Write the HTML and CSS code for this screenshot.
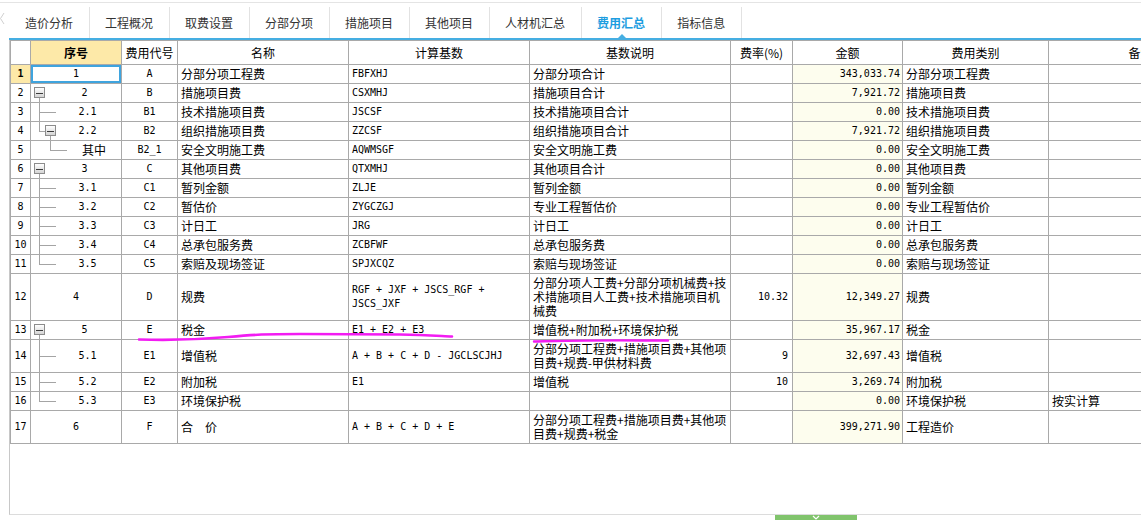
FILE: index.html
```html
<!DOCTYPE html>
<html lang="zh-CN">
<head>
    <meta charset="UTF-8">
    <title>费用汇总</title>
    <link rel="stylesheet" href="styles.css">
</head>
<body>
    <div class="tabbar">
        <span class="nav-prev">
            <svg width="10" height="31" viewBox="0 0 10 31"><polyline points="4,6 0.5,11.5 4,17" fill="none" stroke="#cfcfcf" stroke-width="1"/></svg>
        </span>
        <div class="tabs">
            <span class="tab">造价分析</span>
            <span class="tab">工程概况</span>
            <span class="tab">取费设置</span>
            <span class="tab">分部分项</span>
            <span class="tab">措施项目</span>
            <span class="tab">其他项目</span>
            <span class="tab">人材机汇总</span>
            <span class="tab active">费用汇总</span>
            <span class="tab">指标信息</span>
        </div>
    </div>

    <div class="grid">
        <table class="sheet">
            <colgroup>
                <col style="width:20px">
                <col style="width:91px">
                <col style="width:56px">
                <col style="width:171px">
                <col style="width:181px">
                <col style="width:201px">
                <col style="width:62px">
                <col style="width:110px">
                <col style="width:146px">
                <col style="width:184px">
            </colgroup>
            <thead>
                <tr>
                    <th></th>
                    <th class="hl">序号</th>
                    <th>费用代号</th>
                    <th>名称</th>
                    <th>计算基数</th>
                    <th>基数说明</th>
                    <th>费率(%)</th>
                    <th>金额</th>
                    <th>费用类别</th>
                    <th>备注</th>
                </tr>
            </thead>
            <tbody>
                <tr>
                    <td class="rn cur">1</td>
                    <td class="seq l0 picked">1</td>
                    <td class="code">A</td>
                    <td>分部分项工程费</td>
                    <td class="base">FBFXHJ</td>
                    <td>分部分项合计</td>
                    <td class="rate"></td>
                    <td class="amt">343,033.74</td>
                    <td>分部分项工程费</td>
                    <td></td>
                </tr>
                <tr>
                    <td class="rn">2</td>
                    <td class="seq l0e">2</td>
                    <td class="code">B</td>
                    <td>措施项目费</td>
                    <td class="base">CSXMHJ</td>
                    <td>措施项目合计</td>
                    <td class="rate"></td>
                    <td class="amt">7,921.72</td>
                    <td>措施项目费</td>
                    <td></td>
                </tr>
                <tr>
                    <td class="rn">3</td>
                    <td class="seq l1">2.1</td>
                    <td class="code">B1</td>
                    <td>技术措施项目费</td>
                    <td class="base">JSCSF</td>
                    <td>技术措施项目合计</td>
                    <td class="rate"></td>
                    <td class="amt">0.00</td>
                    <td>技术措施项目费</td>
                    <td></td>
                </tr>
                <tr>
                    <td class="rn">4</td>
                    <td class="seq l1e">2.2</td>
                    <td class="code">B2</td>
                    <td>组织措施项目费</td>
                    <td class="base">ZZCSF</td>
                    <td>组织措施项目合计</td>
                    <td class="rate"></td>
                    <td class="amt">7,921.72</td>
                    <td>组织措施项目费</td>
                    <td></td>
                </tr>
                <tr>
                    <td class="rn">5</td>
                    <td class="seq l2c zh">其中</td>
                    <td class="code">B2_1</td>
                    <td>安全文明施工费</td>
                    <td class="base">AQWMSGF</td>
                    <td>安全文明施工费</td>
                    <td class="rate"></td>
                    <td class="amt">0.00</td>
                    <td>安全文明施工费</td>
                    <td></td>
                </tr>
                <tr>
                    <td class="rn">6</td>
                    <td class="seq l0e">3</td>
                    <td class="code">C</td>
                    <td>其他项目费</td>
                    <td class="base">QTXMHJ</td>
                    <td>其他项目合计</td>
                    <td class="rate"></td>
                    <td class="amt">0.00</td>
                    <td>其他项目费</td>
                    <td></td>
                </tr>
                <tr>
                    <td class="rn">7</td>
                    <td class="seq l1">3.1</td>
                    <td class="code">C1</td>
                    <td>暂列金额</td>
                    <td class="base">ZLJE</td>
                    <td>暂列金额</td>
                    <td class="rate"></td>
                    <td class="amt">0.00</td>
                    <td>暂列金额</td>
                    <td></td>
                </tr>
                <tr>
                    <td class="rn">8</td>
                    <td class="seq l1">3.2</td>
                    <td class="code">C2</td>
                    <td>暂估价</td>
                    <td class="base">ZYGCZGJ</td>
                    <td>专业工程暂估价</td>
                    <td class="rate"></td>
                    <td class="amt">0.00</td>
                    <td>专业工程暂估价</td>
                    <td></td>
                </tr>
                <tr>
                    <td class="rn">9</td>
                    <td class="seq l1">3.3</td>
                    <td class="code">C3</td>
                    <td>计日工</td>
                    <td class="base">JRG</td>
                    <td>计日工</td>
                    <td class="rate"></td>
                    <td class="amt">0.00</td>
                    <td>计日工</td>
                    <td></td>
                </tr>
                <tr>
                    <td class="rn">10</td>
                    <td class="seq l1">3.4</td>
                    <td class="code">C4</td>
                    <td>总承包服务费</td>
                    <td class="base">ZCBFWF</td>
                    <td>总承包服务费</td>
                    <td class="rate"></td>
                    <td class="amt">0.00</td>
                    <td>总承包服务费</td>
                    <td></td>
                </tr>
                <tr>
                    <td class="rn">11</td>
                    <td class="seq l1c">3.5</td>
                    <td class="code">C5</td>
                    <td>索赔及现场签证</td>
                    <td class="base">SPJXCQZ</td>
                    <td>索赔与现场签证</td>
                    <td class="rate"></td>
                    <td class="amt">0.00</td>
                    <td>索赔与现场签证</td>
                    <td></td>
                </tr>
                <tr>
                    <td class="rn">12</td>
                    <td class="seq l0">4</td>
                    <td class="code">D</td>
                    <td>规费</td>
                    <td class="base">RGF + JXF + JSCS_RGF +<br>JSCS_JXF</td>
                    <td>分部分项人工费+分部分项机械费+技<br>术措施项目人工费+技术措施项目机<br>械费</td>
                    <td class="rate">10.32</td>
                    <td class="amt">12,349.27</td>
                    <td>规费</td>
                    <td></td>
                </tr>
                <tr>
                    <td class="rn">13</td>
                    <td class="seq l0e">5</td>
                    <td class="code">E</td>
                    <td>税金</td>
                    <td class="base">E1 + E2 + E3</td>
                    <td>增值税+附加税+环境保护税</td>
                    <td class="rate"></td>
                    <td class="amt">35,967.17</td>
                    <td>税金</td>
                    <td></td>
                </tr>
                <tr>
                    <td class="rn">14</td>
                    <td class="seq l1">5.1</td>
                    <td class="code">E1</td>
                    <td>增值税</td>
                    <td class="base">A + B + C + D - JGCLSCJHJ</td>
                    <td>分部分项工程费+措施项目费+其他项<br>目费+规费-甲供材料费</td>
                    <td class="rate">9</td>
                    <td class="amt">32,697.43</td>
                    <td>增值税</td>
                    <td></td>
                </tr>
                <tr>
                    <td class="rn">15</td>
                    <td class="seq l1">5.2</td>
                    <td class="code">E2</td>
                    <td>附加税</td>
                    <td class="base">E1</td>
                    <td>增值税</td>
                    <td class="rate">10</td>
                    <td class="amt">3,269.74</td>
                    <td>附加税</td>
                    <td></td>
                </tr>
                <tr>
                    <td class="rn">16</td>
                    <td class="seq l1c">5.3</td>
                    <td class="code">E3</td>
                    <td>环境保护税</td>
                    <td class="base"></td>
                    <td></td>
                    <td class="rate"></td>
                    <td class="amt">0.00</td>
                    <td>环境保护税</td>
                    <td>按实计算</td>
                </tr>
                <tr>
                    <td class="rn">17</td>
                    <td class="seq l0">6</td>
                    <td class="code">F</td>
                    <td>合　价</td>
                    <td class="base">A + B + C + D + E</td>
                    <td>分部分项工程费+措施项目费+其他项<br>目费+规费+税金</td>
                    <td class="rate"></td>
                    <td class="amt">399,271.90</td>
                    <td>工程造价</td>
                    <td></td>
                </tr>
            </tbody>
        </table>
    </div>

    <div class="foot">
        <span class="fold">
            <svg width="10" height="6" viewBox="0 0 10 6"><polyline points="2,1 5,4 8,1" fill="none" stroke="#ffffff" stroke-width="1.2"/></svg>
        </span>
    </div>

    <!-- hand-drawn highlight marks over row 13 -->
    <svg class="marks" width="1141" height="520" viewBox="0 0 1141 520">
        <path d="M139 339.5 C 170 340.5, 200 339.5, 228 337 S 265 334, 300 334 L 400 334.5 C 425 335, 440 336, 452 336.5" fill="none" stroke="#f21cf2" stroke-width="2.6" stroke-linecap="round"/>
        <path d="M534 341.5 C 560 341, 600 340, 640 340.5 L 668 340.5" fill="none" stroke="#f21cf2" stroke-width="2.4" stroke-linecap="round"/>
    </svg>
</body>
</html>
```

FILE: styles.css
```css
* {
    box-sizing: border-box;
}

body {
    margin: 0;
    width: 1141px;
    height: 520px;
    overflow: hidden;
    position: relative;
    background: #ffffff;
    color: #000000;
    font-family: "Noto Sans CJK SC", sans-serif;
    font-size: 12px;
}

/* top tab strip */
.tabbar {
    display: flex;
    margin-top: 2px;
    border-top: 1px solid #e4e4e4;
    padding-top: 4px;
}

.nav-prev {
    width: 9px;
    flex: none;
}

.nav-prev svg {
    display: block;
}

.tabs {
    display: flex;
    flex: 1;
    border-bottom: 2px solid #45aee2;
}

.tab {
    position: relative;
    height: 31px;
    line-height: 32px;
    padding: 0 16px 0 15px;
    border-right: 1px solid #e2e2e2;
    color: #333333;
    white-space: nowrap;
}

.tab:first-child {
    margin-left: 1px;
}

.tab.active {
    color: #1d9de0;
    font-weight: bold;
}

.tab.active::after {
    content: "";
    position: absolute;
    left: 50%;
    bottom: 0;
    margin-left: -4px;
    border-left: 4px solid transparent;
    border-right: 4px solid transparent;
    border-bottom: 4px solid #45aee2;
}

/* grid */
.grid {
    margin-left: 9px;
    height: 475px;
    border-left: 1px solid #c8c8c8;
    border-bottom: 1px solid #dcdcdc;
    overflow: hidden;
}

.sheet {
    border-collapse: collapse;
    table-layout: fixed;
    width: 1222px;
}

.sheet th,
.sheet td {
    border: 1px solid #a9a9a9;
    padding: 2px 3px;
    line-height: 14px;
    white-space: nowrap;
    overflow: hidden;
    vertical-align: middle;
    text-align: left;
}

.sheet thead tr {
    height: 24px;
}

.sheet th {
    font-weight: normal;
    text-align: center;
}

.sheet th.hl {
    background: #fde9a8;
    font-weight: bold;
}

.rn,
.seq,
.code,
.base,
.rate,
.amt {
    font-family: "DejaVu Sans Mono", monospace;
    font-size: 10px;
}

.sheet .rn {
    text-align: center;
    padding: 2px 0;
}

.sheet .rn.cur {
    background: #fde9a8;
    font-weight: bold;
}

.sheet .code {
    text-align: center;
}

.sheet .rate {
    text-align: right;
    padding-right: 4px;
}

.sheet .amt {
    text-align: right;
    padding-right: 2px;
    background: #fdfdee;
}

/* 序号 column with tree */
.sheet .seq {
    text-align: center;
    background-repeat: no-repeat;
}

.sheet .seq.zh {
    font-family: "Noto Sans CJK SC", sans-serif;
    font-size: 12px;
}

.sheet .seq.picked {
    box-shadow: inset 0 0 0 2px #3fa4de;
}

.sheet .seq.l0e {
    padding-left: 20px;
    background-image:
        linear-gradient(#3c3c3c, #3c3c3c),
        linear-gradient(#ffffff, #d4d4d4),
        linear-gradient(#8c8c8c, #8c8c8c),
        linear-gradient(#a4a4a4, #a4a4a4);
    background-position: 5px 9px, 4px 4px, 3px 3px, 8px 14px;
    background-size: 7px 1px, 9px 9px, 11px 11px, 1px 100%;
}

.sheet .seq.l1 {
    padding-left: 26px;
    background-image:
        linear-gradient(#a4a4a4, #a4a4a4),
        linear-gradient(#a4a4a4, #a4a4a4);
    background-position: 8px 0, 8px 50%;
    background-size: 1px 100%, 17px 1px;
}

.sheet .seq.l1c {
    padding-left: 26px;
    background-image:
        linear-gradient(#a4a4a4, #a4a4a4),
        linear-gradient(#a4a4a4, #a4a4a4);
    background-position: 8px 0, 8px 50%;
    background-size: 1px 50%, 17px 1px;
}

.sheet .seq.l1e {
    padding-left: 26px;
    background-image:
        linear-gradient(#3c3c3c, #3c3c3c),
        linear-gradient(#ffffff, #d4d4d4),
        linear-gradient(#8c8c8c, #8c8c8c),
        linear-gradient(#a4a4a4, #a4a4a4),
        linear-gradient(#a4a4a4, #a4a4a4),
        linear-gradient(#a4a4a4, #a4a4a4);
    background-position: 16px 9px, 15px 4px, 14px 3px, 19px 14px, 8px 0, 8px 9px;
    background-size: 7px 1px, 9px 9px, 11px 11px, 1px 100%, 1px 9px, 6px 1px;
}

.sheet .seq.l2c {
    padding-left: 39px;
    background-image:
        linear-gradient(#a4a4a4, #a4a4a4),
        linear-gradient(#a4a4a4, #a4a4a4);
    background-position: 19px 0, 19px 50%;
    background-size: 1px 50%, 17px 1px;
}

/* bottom strip */
.foot {
    height: 20px;
}

.fold {
    display: block;
    margin-left: 775px;
    width: 82px;
    height: 12px;
    background: #80c46c;
    text-align: center;
}

.fold svg {
    display: block;
    margin: 0 auto;
}

.marks {
    position: absolute;
    top: 0;
    left: 0;
    pointer-events: none;
}
```
